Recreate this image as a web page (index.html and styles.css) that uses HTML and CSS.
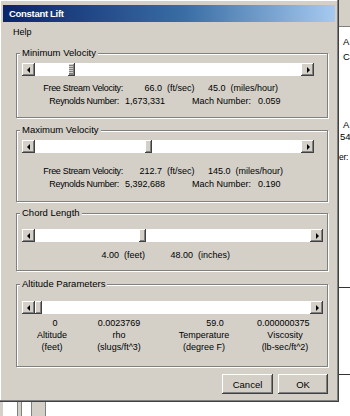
FILE: index.html
```html
<!DOCTYPE html>
<html lang="en">
<head>
  <meta charset="UTF-8">
  <title>Constant Lift</title>
  <link rel="stylesheet" href="styles.css">
</head>
<body>

<div class="screen">
  <div class="top">
    <div class="dialog">
      <div class="titlebar">Constant Lift</div>
      <div class="menubar"><span class="menu-item">Help</span></div>

      <div class="content">
        <fieldset class="group group-min">
          <legend>Minimum Velocity</legend>
          <div class="scrollbar">
            <div class="arrow-btn"><span class="arrow left"></span></div>
            <div class="track"><div class="thumb focus" style="margin-left: 33px"></div></div>
            <div class="arrow-btn"><span class="arrow right"></span></div>
          </div>
          <div class="row row-speed">
            <span class="cell-right">Free Stream Velocity:</span>
            <span class="cell-right">66.0</span>
            <span class="cell-unit">(ft/sec)</span>
            <span class="cell-pad">45.0&nbsp;&nbsp;(miles/hour)</span>
          </div>
          <div class="row row-reynolds">
            <span class="cell-right">Reynolds Number:</span>
            <span class="cell-num">1,673,331</span>
            <span>Mach Number:</span>
            <span class="cell-mach">0.059</span>
          </div>
        </fieldset>

        <fieldset class="group group-max">
          <legend>Maximum Velocity</legend>
          <div class="scrollbar">
            <div class="arrow-btn"><span class="arrow left"></span></div>
            <div class="track"><div class="thumb" style="margin-left: 110px"></div></div>
            <div class="arrow-btn"><span class="arrow right"></span></div>
          </div>
          <div class="row row-speed">
            <span class="cell-right">Free Stream Velocity:</span>
            <span class="cell-right">212.7</span>
            <span class="cell-unit">(ft/sec)</span>
            <span class="cell-pad">145.0&nbsp;&nbsp;(miles/hour)</span>
          </div>
          <div class="row row-reynolds">
            <span class="cell-right">Reynolds Number:</span>
            <span class="cell-num">5,392,688</span>
            <span>Mach Number:</span>
            <span class="cell-mach">0.190</span>
          </div>
        </fieldset>

        <fieldset class="group group-chord">
          <legend>Chord Length</legend>
          <div class="scrollbar wide">
            <div class="arrow-btn"><span class="arrow left"></span></div>
            <div class="track"><div class="thumb" style="margin-left: 104px"></div></div>
            <div class="arrow-btn"><span class="arrow right"></span></div>
          </div>
          <div class="row row-chord">
            <span class="cell-right">4.00</span>
            <span class="cell-unit">(feet)</span>
            <span class="cell-right">48.00</span>
            <span class="cell-unit">(inches)</span>
          </div>
        </fieldset>

        <fieldset class="group group-alt">
          <legend>Altitude Parameters</legend>
          <div class="scrollbar wide">
            <div class="arrow-btn"><span class="arrow left"></span></div>
            <div class="track"><div class="thumb" style="margin-left: 0px"></div></div>
            <div class="arrow-btn"><span class="arrow right"></span></div>
          </div>
          <div class="alt-grid">
            <span class="v1">0</span>
            <span>0.0023769</span>
            <span class="v3">59.0</span>
            <span class="v4">0.000000375</span>
            <span>Altitude</span>
            <span>rho</span>
            <span>Temperature</span>
            <span>Viscosity</span>
            <span>(feet)</span>
            <span>(slugs/ft^3)</span>
            <span>(degree F)</span>
            <span>(lb-sec/ft^2)</span>
          </div>
        </fieldset>

        <div class="buttons">
          <button class="btn btn-cancel">Cancel</button>
          <button class="btn btn-ok">OK</button>
        </div>
      </div>
    </div>

    <div class="backwin">
      <div class="bw-frame"></div>
      <div class="bw-text bw-a1">A</div>
      <div class="bw-text bw-c">C</div>
      <div class="bw-text bw-a2">A</div>
      <div class="bw-text bw-54">54</div>
      <div class="bw-text bw-er">er:</div>
      <div class="bw-line bw-line1"></div>
      <div class="bw-line bw-line2"></div>
    </div>
  </div>

  <div class="under">
    <div class="under-edge"></div>
    <div class="under-bar thin"></div>
    <div class="under-bar thick"></div>
  </div>
</div>

</body>
</html>
```

FILE: styles.css
```css
body {
  margin: 0;
  background-color: #fff;
  font-family: "Liberation Sans", Arial, sans-serif;
  font-size: 9px;
  color: #000;
}

.screen {
  width: 350px;
  height: 416px;
  overflow: hidden;
}

.top {
  display: flex;
  height: 402px;
}

/* dialog window */
.dialog {
  width: 339px;
  height: 402px;
  box-sizing: border-box;
  flex-shrink: 0;
  background-color: #d4d0c8;
  border-right: 1px solid #404040;
  border-bottom: 1px solid #404040;
  box-shadow: inset -1px -1px 0 #808080, inset 1px 1px 0 #fff;
  padding: 5px 3px 0 3px;
  display: flex;
  flex-direction: column;
}

.titlebar {
  height: 17px;
  line-height: 17px;
  padding-left: 6px;
  background: linear-gradient(to right, #0a246a, #3a6ea5 55%, #a6caf0);
  color: #fff;
  font-weight: bold;
  font-size: 9.5px;
  letter-spacing: -0.3px;
}

.menubar {
  height: 20px;
  line-height: 21px;
  padding-left: 10px;
}

.content {
  padding-left: 13px;
  width: 312px;
}

/* group boxes */
.group {
  margin: 0;
  padding: 0;
  min-width: 0;
  border: 1px solid #808080;
  box-shadow: inset 1px 1px 0 #fff, 1px 1px 0 #fff;
}

.group legend {
  margin-left: 3px;
  padding: 0 2px;
  line-height: 10px;
  font-size: 9.5px;
  background-color: #d4d0c8;
}

.group-min { margin-top: 6px; padding-bottom: 9px; }
.group-max { margin-top: 7px; padding-bottom: 10px; }
.group-chord { margin-top: 6px; padding-bottom: 8px; }
.group-alt { margin-top: 8px; padding-bottom: 13px; }

/* scroll bars */
.scrollbar {
  display: flex;
  width: 292px;
  height: 13px;
  margin-left: 5px;
  margin-top: 5px;
}

.scrollbar.wide {
  width: 301px;
}

.group-chord .scrollbar { margin-top: 11px; }
.group-alt .scrollbar { margin-top: 12px; }

.arrow-btn, .thumb {
  width: 13px;
  height: 13px;
  box-sizing: border-box;
  background-color: #d4d0c8;
  box-shadow: inset -1px -1px 0 #404040, inset 1px 1px 0 #fff, inset -2px -2px 0 #808080;
  flex-shrink: 0;
}

.arrow-btn {
  display: flex;
  align-items: center;
  justify-content: center;
}

.arrow {
  width: 0;
  height: 0;
  border-top: 3px solid transparent;
  border-bottom: 3px solid transparent;
}

.arrow.left { border-right: 3px solid #000; margin-right: 1px; }
.arrow.right { border-left: 3px solid #000; margin-left: 1px; }

.track {
  flex: 1;
  display: flex;
  background-color: #fff;
}

.thumb {
  width: 7px;
}

.thumb.focus {
  background: repeating-linear-gradient(to bottom, #808080 0 1px, #d4d0c8 1px 2px);
}

/* readouts */
.row {
  display: grid;
  line-height: 13px;
  white-space: nowrap;
}

.row-speed {
  grid-template-columns: 106px 39px 35px auto;
  margin-top: 6px;
}

.row-speed .cell-right:first-child,
.row-reynolds .cell-right {
  letter-spacing: -0.3px;
}

.group-max .row-speed { margin-top: 12px; }

.row-reynolds {
  grid-template-columns: 102px 73px 64px auto;
}

.row-chord {
  grid-template-columns: 102px 41px 33px auto;
  margin-top: 7px;
}

.cell-right { text-align: right; }
.cell-pad { padding-left: 11px; }
.cell-num { padding-left: 6px; }
.cell-mach { padding-left: 2px; }
.cell-unit { padding-left: 5px; }

.alt-grid {
  display: grid;
  grid-template-columns: 70px 64px 106px 56px;
  line-height: 12px;
  margin-top: 3px;
  text-align: center;
  white-space: nowrap;
}

.alt-grid .v1 { padding-left: 6px; }
.alt-grid .v3 { padding-left: 22px; }
.alt-grid .v4 { padding-right: 6px; }

/* buttons */
.buttons {
  display: flex;
  justify-content: flex-end;
  gap: 5px;
  margin-top: 7px;
}

.btn {
  width: 50px;
  height: 20px;
  padding: 0;
  border: none;
  background-color: #d4d0c8;
  box-shadow: inset -1px -1px 0 #404040, inset 1px 1px 0 #fff, inset -2px -2px 0 #808080;
  font-family: inherit;
  font-size: 9.5px;
  color: #000;
}

.btn-cancel { width: 51px; }

/* window behind the dialog */
.backwin {
  flex: 1;
  display: flex;
  flex-direction: column;
  background-color: #fff;
  overflow: hidden;
  font-size: 9.5px;
}

.bw-frame {
  height: 26px;
  background-color: #d4d0c8;
  border-bottom: 1px solid #808080;
}

.bw-text {
  line-height: 12px;
  padding-left: 4px;
}

.bw-a1 { margin-top: 9px; }
.bw-c { margin-top: 3px; }
.bw-a2 { margin-top: 56px; }
.bw-54 { padding-left: 1px; }
.bw-er { margin-top: 8px; padding-left: 0; font-size: 8.5px; letter-spacing: -0.3px; }

.bw-line {
  height: 1px;
  background-color: #333;
}

.bw-line1 { margin-top: 124px; }
.bw-line2 { margin-top: 86px; }

.under {
  display: flex;
  height: 14px;
  background-color: #fff;
}

.under-edge {
  width: 3px;
  background-color: #d4d0c8;
}

.under-bar {
  background-color: #d4d0c8;
  border-left: 1px solid #808080;
  border-right: 1px solid #808080;
}

.under-bar.thin { width: 3px; margin-left: 14px; }
.under-bar.thick { width: 13px; margin-left: 9px; }
```
